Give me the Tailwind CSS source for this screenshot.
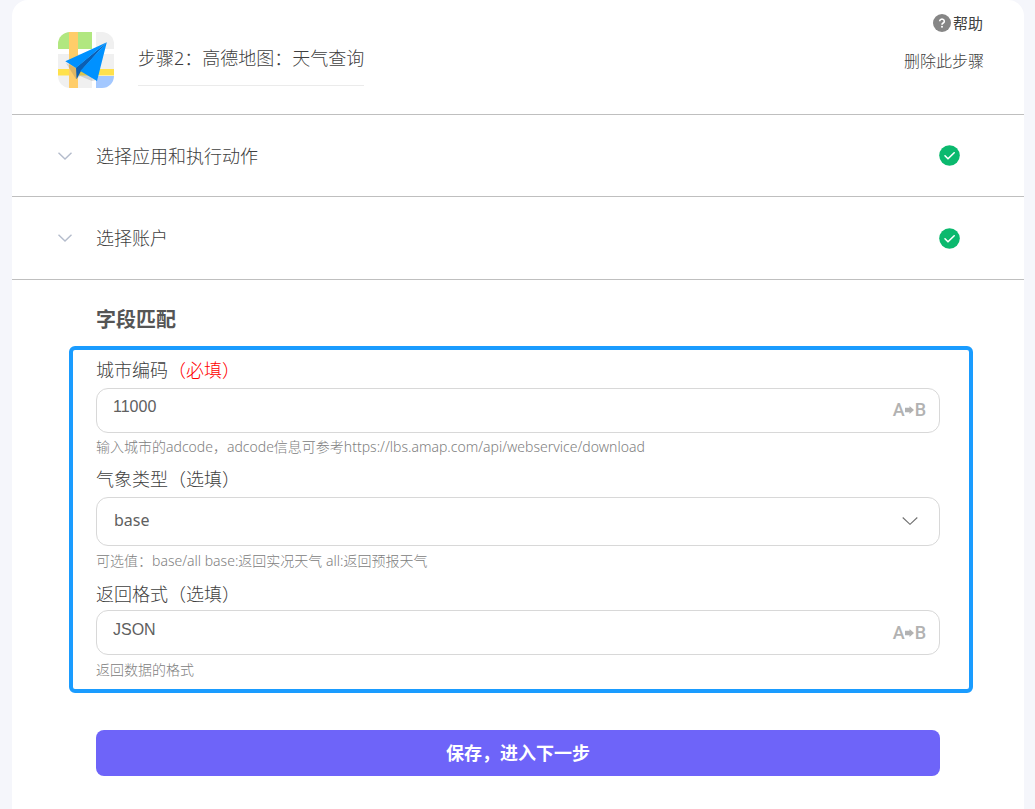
<!DOCTYPE html>
<html lang="zh-CN">
<head>
<meta charset="utf-8">
<meta name="viewport" content="width=device-width, initial-scale=1">
<title>步骤2：高德地图：天气查询</title>
<script src="https://cdn.jsdelivr.net/npm/@tailwindcss/browser@4"></script>
</head>
<body class="bg-[#f5f6fb] font-['Noto_Sans','Noto_Sans_CJK_SC',sans-serif] font-light text-[#404040]">
<main class="ml-3 mr-[11px] min-h-screen rounded-t-2xl bg-white pb-8">
  <header class="flex h-[115px] items-start justify-between border-b border-[#bfbfbf] pl-[46px] pr-10">
    <div class="flex pt-8">
      <svg class="size-14 shrink-0" viewBox="0 0 56 56" role="img" aria-label="高德地图">
        <defs><clipPath id="tile"><rect width="56" height="56" rx="12"/></clipPath></defs>
        <g clip-path="url(#tile)">
          <path fill="#fff" d="M0 0h56v56H0z"/>
          <path fill="#b1e780" d="M0 0h34v17H0z"/>
          <path fill="#f0f0f0" d="M38 0h18v17H38zM0 22h34v15H0zM38 22h18v15H38zM0 43h34v13H0z"/>
          <path fill="#a3c8ff" d="M38 44h18v12H38z"/>
          <path fill="#ffe14c" d="M0 37h56v6.500H0z"/>
          <path fill="#ffcd69" d="M11 0h9v56h-9z"/>
          <path fill="#555" fill-opacity=".2" d="M8 31l10 16 4-3 12 5 5-1-17-10z"/>
          <path fill="#0c5fb3" d="M48.800 10.200L18 35.500l.6 11.800L23 39z"/>
          <path fill="#0091ff" d="M48.800 10.200L7.300 29.300 18 36zM48.800 10.200L22.300 39 39 49z"/>
        </g>
      </svg>
      <h1 class="ml-6 h-[54px] border-b border-[#ebebeb] text-lg leading-[52px] font-light">步骤2：高德地图：天气查询</h1>
    </div>
    <div class="flex flex-col items-end gap-4 pt-3">
      <a href="#" class="flex items-center gap-0.5 pr-px text-[15px] leading-[22px] font-normal text-[#404040]">
        <svg class="size-[18px]" viewBox="0 0 18 18" aria-hidden="true"><circle cx="9" cy="9" r="9" fill="#868686"/><path d="M6.700 7.200a2.300 2.100 0 1 1 3.500 1.800c-.8.500-1.200.8-1.200 1.700" fill="none" stroke="#fff" stroke-width="1.600"/><circle cx="9" cy="12.800" r="1" fill="#fff"/></svg>
        帮助
      </a>
      <button type="button" class="text-base leading-[22px]">删除此步骤</button>
    </div>
  </header>

  <button type="button" class="flex h-[82px] w-full items-center border-b border-[#bfbfbf] pl-[46px] pr-16 text-left text-lg">
    <svg class="mr-6 h-2 w-3.5" viewBox="0 0 14 8" fill="none" stroke="#b4bccc" stroke-width="1.400" aria-hidden="true"><path d="M.5.8L7 7 13.500.8"/></svg>
    <span class="flex-1">选择应用和执行动作</span>
    <svg class="size-[21px]" viewBox="0 0 21 21" role="img" aria-label="已完成"><circle cx="10.500" cy="10.500" r="10.300" fill="#0bb96e"/><path d="M6 10.800l3 3 6.200-6" fill="none" stroke="#fff" stroke-width="1.600" stroke-linecap="round" stroke-linejoin="round"/></svg>
  </button>
  <button type="button" class="flex h-[83px] w-full items-center border-b border-[#bfbfbf] pl-[46px] pr-16 text-left text-lg">
    <svg class="mr-6 h-2 w-3.5" viewBox="0 0 14 8" fill="none" stroke="#b4bccc" stroke-width="1.400" aria-hidden="true"><path d="M.5.8L7 7 13.500.8"/></svg>
    <span class="flex-1">选择账户</span>
    <svg class="size-[21px]" viewBox="0 0 21 21" role="img" aria-label="已完成"><circle cx="10.500" cy="10.500" r="10.300" fill="#0bb96e"/><path d="M6 10.800l3 3 6.200-6" fill="none" stroke="#fff" stroke-width="1.600" stroke-linecap="round" stroke-linejoin="round"/></svg>
  </button>

  <form>
    <h2 class="px-[84px] pt-[25px] pb-[11px] text-xl leading-[30px] font-bold text-[#555]">字段匹配</h2>
    <div class="ml-[57px] mr-[51px] rounded-md border-4 border-[#1a9cff] py-2 pl-[23px] pr-[29px]">
      <div class="flex flex-col">
        <label for="city" class="mb-1.5 text-lg leading-6">城市编码<span class="text-[#ff0000]">（必填）</span></label>
        <div class="flex h-[45px] items-center rounded-xl border border-[#d8d8d8] pl-4 pr-3">
          <input id="city" type="text" value="11000" class="h-full min-w-0 flex-1 pb-2 font-['Liberation_Sans',sans-serif] text-base text-[#606060] outline-none">
          <button type="button" aria-label="映射字段" class="flex items-center pr-px pb-0.5 font-[Roboto,sans-serif] text-lg font-medium text-[#b2b2b2]"><span>A</span><svg class="h-2 w-[9px]" viewBox="0 0 9 8" fill="currentColor" aria-hidden="true"><path d="M0 1.800h4.500V0L9 4 4.500 8V6.200H0z"/></svg><span class="ml-px">B</span></button>
        </div>
        <p class="mt-1 text-sm leading-5 text-[#808080]">输入城市的adcode，adcode信息可参考https://lbs.amap.com/api/webservice/download</p>
      </div>
      <div class="mt-2.5 flex flex-col">
        <label for="type" class="mb-1.5 text-lg leading-6">气象类型（选填）</label>
        <div class="relative">
          <select id="type" class="block h-[49px] w-full appearance-none rounded-xl border border-[#d8d8d8] pb-1 pl-[17px] pr-12 text-base font-normal text-[#606060] outline-none">
            <option>base</option>
            <option>all</option>
          </select>
          <svg class="pointer-events-none absolute top-5 right-[22px] h-2 w-4" viewBox="0 0 16 8" fill="none" stroke="#707070" stroke-width="1.100" aria-hidden="true"><path d="M.7.500L8 7.300 15.300.5"/></svg>
        </div>
        <p class="mt-1 text-sm leading-[22px] text-[#808080]">可选值：base/all base:返回实况天气 all:返回预报天气</p>
      </div>
      <div class="mt-2.5 flex flex-col">
        <label for="format" class="mb-1 text-lg leading-6">返回格式（选填）</label>
        <div class="flex h-[45px] items-center rounded-xl border border-[#d8d8d8] pl-4 pr-3">
          <input id="format" type="text" value="JSON" class="h-full min-w-0 flex-1 pb-1.5 font-['Liberation_Sans',sans-serif] text-base text-[#606060] outline-none">
          <button type="button" aria-label="映射字段" class="flex items-center pr-px font-[Roboto,sans-serif] text-lg font-medium text-[#b2b2b2]"><span>A</span><svg class="h-2 w-[9px]" viewBox="0 0 9 8" fill="currentColor" aria-hidden="true"><path d="M0 1.800h4.500V0L9 4 4.500 8V6.200H0z"/></svg><span class="ml-px">B</span></button>
        </div>
        <p class="mt-1 text-sm leading-[22px] text-[#808080]">返回数据的格式</p>
      </div>
    </div>
    <div class="px-[84px] pt-[37px]">
      <button type="submit" class="h-[46px] w-full rounded-lg bg-[#6e64f9] text-lg font-bold text-white">保存，进入下一步</button>
    </div>
  </form>
</main>
</body>
</html>
